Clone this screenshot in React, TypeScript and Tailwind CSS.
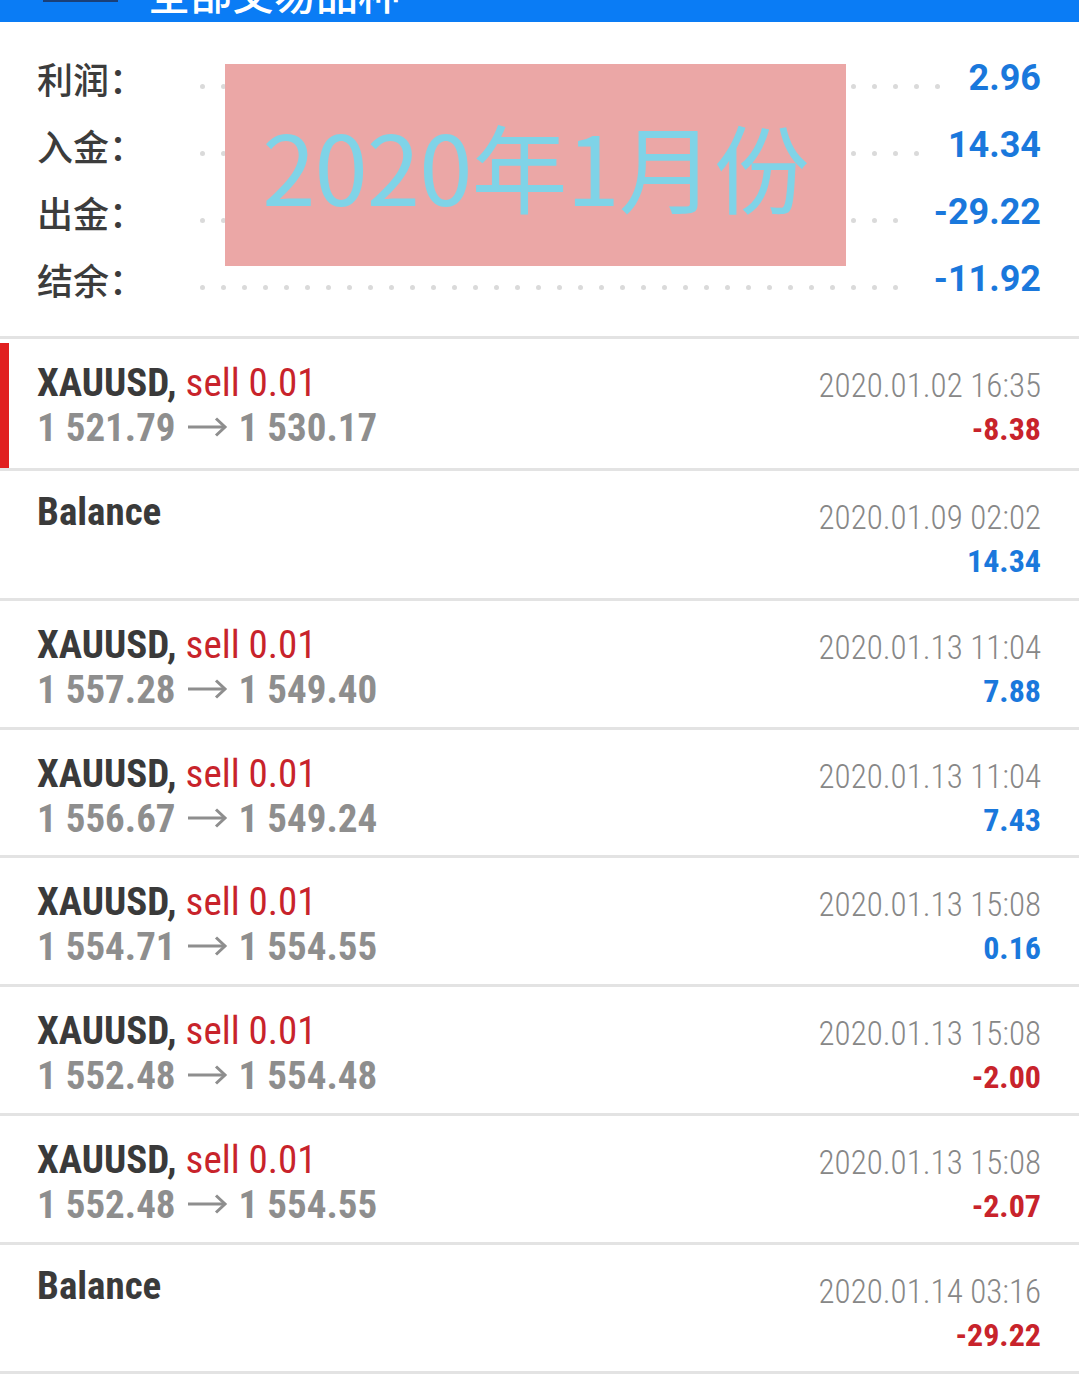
import React from "react";

const NUM = "font-['Roboto_Condensed','Liberation_Sans_Narrow','Roboto',sans-serif]";
const ROBOTO = "font-['Roboto','Liberation_Sans',sans-serif]";
const CJK = "font-['Noto_Sans_CJK_SC','Noto_Sans',sans-serif]";

type Trade = {
  kind: "trade" | "balance";
  open?: string;
  close?: string;
  date: string;
  value: string;
  positive: boolean;
  marked?: boolean;
  h: string;
};

const rows: Trade[] = [
  { kind: "trade", open: "1 521.79", close: "1 530.17", date: "2020.01.02 16:35", value: "-8.38", positive: false, marked: true, h: "h-[132px]" },
  { kind: "balance", date: "2020.01.09 02:02", value: "14.34", positive: true, h: "h-[130px]" },
  { kind: "trade", open: "1 557.28", close: "1 549.40", date: "2020.01.13 11:04", value: "7.88", positive: true, h: "h-[129px]" },
  { kind: "trade", open: "1 556.67", close: "1 549.24", date: "2020.01.13 11:04", value: "7.43", positive: true, h: "h-[128px]" },
  { kind: "trade", open: "1 554.71", close: "1 554.55", date: "2020.01.13 15:08", value: "0.16", positive: true, h: "h-[129px]" },
  { kind: "trade", open: "1 552.48", close: "1 554.48", date: "2020.01.13 15:08", value: "-2.00", positive: false, h: "h-[129px]" },
  { kind: "trade", open: "1 552.48", close: "1 554.55", date: "2020.01.13 15:08", value: "-2.07", positive: false, h: "h-[129px]" },
  { kind: "balance", date: "2020.01.14 03:16", value: "-29.22", positive: false, h: "h-[129px]" },
];

const summary = [
  { label: "利润：", value: "2.96" },
  { label: "入金：", value: "14.34" },
  { label: "出金：", value: "-29.22" },
  { label: "结余：", value: "-11.92" },
];

function Dots() {
  return (
    <div className="flex-1 flex flex-wrap gap-x-[16px] h-[5px] overflow-hidden mt-[18px]">
      {Array.from({ length: 60 }).map((_, i) => (
        <span key={i} className="w-[5px] h-[5px] rounded-full bg-[#dadada] shrink-0" />
      ))}
    </div>
  );
}

function Arrow() {
  return (
    <svg
      viewBox="0 0 40 22"
      className="inline-block w-[40px] h-[22px] ml-[12px] mr-[11px] align-[3px]"
      fill="none"
      stroke="currentColor"
      strokeWidth={3}
      strokeLinecap="butt"
      strokeLinejoin="miter"
    >
      <path d="M0 11 H37" />
      <path d="M28 2.5 L37 11 L28 19.5" />
    </svg>
  );
}

export default function App() {
  return (
    <div className="w-[1079px] h-[1380px] bg-white overflow-hidden">
      {/* top bar (cut off) */}
      <div className="h-[22px] bg-[#0a7cf5] flex items-start overflow-hidden">
        <div className="ml-[43px] w-[75px] h-[2px] bg-[#1a3f78] shrink-0" />
        <div className={`${CJK} ml-[30px] mt-[-29px] text-[42px] leading-[42px] text-white font-medium whitespace-nowrap`}>
          全部交易品种
        </div>
      </div>

      {/* summary */}
      <div className="relative pt-[22px] pb-[24px] border-b-[3px] border-[#e3e3e3]">
        {summary.map((s) => (
          <div key={s.label} className="flex items-center h-[67px] pl-[37px] pr-[38px]">
            <div className={`${CJK} w-[163px] shrink-0 text-[36px] leading-none font-medium text-[#3c3c3c]`}>
              {s.label}
            </div>
            <Dots />
            <div className={`${ROBOTO} ml-[28px] text-[36px] leading-none font-bold text-[#1a78dc]`}>{s.value}</div>
          </div>
        ))}
        <div className="absolute left-[225px] top-[42px] w-[621px] h-[202px] bg-[#eba7a6] flex items-center justify-center">
          <span className={`${CJK} text-[96px] leading-none text-[#7fd3e7] tracking-[-1px]`}>2020年1月份</span>
        </div>
      </div>

      {/* list */}
      {rows.map((r, i) => (
        <div key={i} className={`relative ${r.h} border-b-[3px] border-[#e3e3e3] flex justify-between pl-[37px] pr-[38px]`}>
          {r.marked && <div className="absolute left-0 top-[4px] bottom-0 w-[9px] bg-[#e11f1f]" />}
          <div className={`${NUM} ${r.kind === "trade" ? "pt-[22px]" : "pt-[19px]"}`}>
            {r.kind === "trade" ? (
              <>
                <div className="text-[39px] leading-[45px] whitespace-nowrap">
                  <span className="font-bold text-[#3a3a3a]">XAUUSD, </span>
                  <span className="text-[#c8232b]">sell 0.01</span>
                </div>
                <div className="text-[39px] leading-[45px] font-bold text-[#8e8e8e] whitespace-nowrap">
                  {r.open}
                  <Arrow />
                  {r.close}
                </div>
              </>
            ) : (
              <div className="text-[39px] leading-[45px] font-bold text-[#3a3a3a]">Balance</div>
            )}
          </div>
          <div className={`${NUM} pt-[24px] flex flex-col items-end`}>
            <div className="text-[33px] leading-[46px] font-light text-[#878787] whitespace-nowrap">{r.date}</div>
            <div
              className={`text-[32px] leading-[40px] font-bold ${r.positive ? "text-[#1a78dc]" : "text-[#c8232b]"}`}
            >
              {r.value}
            </div>
          </div>
        </div>
      ))}
    </div>
  );
}
